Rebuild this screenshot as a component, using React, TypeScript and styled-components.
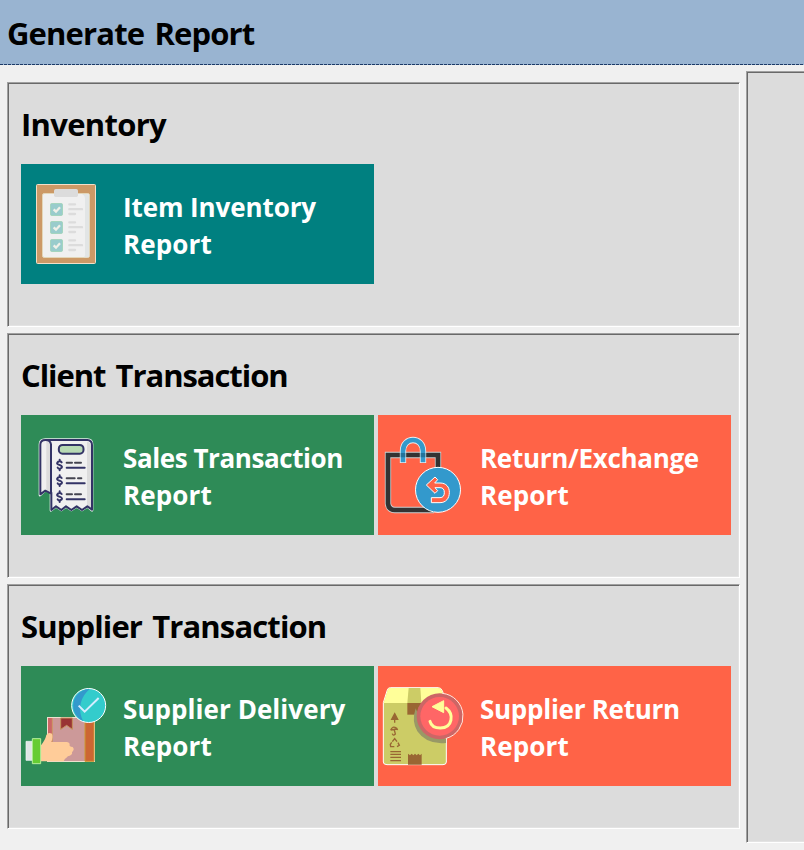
import React from "react";
import styled, { createGlobalStyle } from "styled-components";

const GlobalStyle = createGlobalStyle`
  * { box-sizing: border-box; }
  body {
    margin: 0;
    background: #f0f0f0;
    font-family: "Open Sans", "Noto Sans", sans-serif;
    overflow: hidden;
  }
`;

const Window = styled.div`
  display: flex;
  flex-direction: column;
  width: 804px;
  height: 850px;
  overflow: hidden;
`;

const Header = styled.header`
  flex: none;
  height: 65px;
  padding: 12px 0 0 7px;
  background:
    repeating-linear-gradient(90deg, #1c3a66 0 3px, #99b4d1 3px 4px) 0 100% / 100% 1px no-repeat,
    #99b4d1;
`;

const Title = styled.h1<{ $spacing: number }>`
  margin: 0;
  height: 44px;
  font-size: 31px;
  line-height: 42px;
  font-weight: 700;
  letter-spacing: ${(p) => p.$spacing}px;
  word-spacing: 3px;
  white-space: nowrap;
  color: #000;
`;

const Content = styled.main`
  display: flex;
  align-items: flex-start;
  gap: 6px;
  padding: 6px 0 0 7px;
`;

const Sections = styled.div`
  display: flex;
  flex: none;
  flex-direction: column;
  gap: 6px;
  width: 733px;
  padding-top: 11px;
`;

const Sunken = styled.section`
  background: #dcdcdc;
  border: 1px solid;
  border-color: #a0a0a0 #fff #fff #a0a0a0;
  box-shadow: inset 1px 1px 0 #696969, inset -1px -1px 0 #e3e3e3;
`;

const Group = styled(Sunken)`
  height: 245px;
  padding: 20px 0 0 13px;
`;

const SidePanel = styled(Sunken)`
  flex: none;
  width: 80px;
  height: 772px;
`;

const Tiles = styled.div`
  display: flex;
  gap: 4px;
  margin-top: 17px;
`;

const Tile = styled.button<{ $color: string }>`
  display: flex;
  align-items: center;
  width: 353px;
  height: 120px;
  padding: 0;
  border: 0;
  background: ${(p) => p.$color};
  color: #fff;
  font: 700 26px/37px "Open Sans", "Noto Sans", sans-serif;
  text-align: left;
`;

const Label = styled.span`
  padding: 3px 0 0 2px;
`;

const Line = styled.span<{ $spacing: number }>`
  display: block;
  white-space: nowrap;
  letter-spacing: ${(p) => p.$spacing}px;
`;

const Icon = styled.svg`
  flex: none;
  width: 100px;
  height: 120px;
`;

const InventoryIcon = () => (
  <Icon viewBox="3 0 300 360">
    <rect x="49.500" y="61.500" width="177" height="237" rx="3" fill="#cc9966" stroke="#f3dfc8" strokeWidth="3" />
    <rect x="67.500" y="88.500" width="141" height="192" rx="5" fill="#f0f0f0" stroke="#e3d6b8" strokeWidth="3" />
    <path d="M186 90h15q6 0 6 6v180q0 4-6 4h-9q4-4 3-12V102q0-8-9-12z" fill="#e2e5e5" />
    <rect x="102" y="75" width="72" height="24" rx="5" fill="#dcdcdc" />
    {[117, 171, 225].map((y) => (
      <g key={y}>
        <rect x="91.500" y={y + 1.5} width="36" height="36" rx="4" fill="#99cccc" stroke="#a4d5be" strokeWidth="3" />
        <path d={`M101 ${y + 19}l7 7 12-13`} fill="none" stroke="#f0f0e8" strokeWidth="7" />
        <path d={`M148 ${y + 4}h17M148 ${y + 18.5}h38M148 ${y + 33}h17`} stroke="#dcdcdc" strokeWidth="7" strokeLinecap="round" />
      </g>
    ))}
  </Icon>
);

const SALES_BODY =
  "M60 240V88Q60 74 76 74H202Q216 74 216 88V286L202 274 186 285 170 274 154 285 138 274 124 285 108 274 93 286V232L76 226z";

const SalesIcon = () => (
  <Icon viewBox="3 0 300 360">
    <path d={SALES_BODY} fill="#f0f0f0" stroke="#e9f2ec" strokeWidth="8" strokeLinejoin="round" />
    <path d="M79 80q12 0 12 15v136l-12-6z" fill="#dcdcdc" />
    <path d="M201 80q12 2 12 15v185l-12-9z" fill="#dcdcdc" />
    <path
      d="M93 232V88Q91 75 76 75 61 75 61 89V238L76 227 92 235M76 75H202Q216 76 216 90V284L202 274 186 285 170 274 154 285 138 274 124 285 108 274 94 285V232"
      fill="none"
      stroke="#333366"
      strokeWidth="6"
      strokeLinejoin="round"
    />
    <rect x="116.500" y="90" width="74" height="26" rx="11" fill="#b7d9b4" stroke="#333366" strokeWidth="6" />
    {[150, 197, 245].map((y) => (
      <g key={y} fill="none" stroke="#333366" strokeWidth="6" strokeLinecap="round">
        <path d={`M125 ${y - 8}Q121 ${y - 13} 115 ${y - 10}C107 ${y - 4} 114 ${y - 1} 119 ${y}C128 ${y + 3} 128 ${y + 8} 121 ${y + 11}Q115 ${y + 12} 113 ${y + 8}M119 ${y - 16}v5M119 ${y + 11}v5`} />
        <path d={y === 197 ? `M140 ${y - 7}h24M174 ${y - 7}h10` : `M140 ${y - 7}h16M165 ${y - 7}h18`} stroke="#444450" />
        <path d={`M140 ${y + 8}h54`} />
      </g>
    ))}
  </Icon>
);

const ExchangeIcon = () => (
  <Icon viewBox="12 0 300 360">
    <path d="M192 160V120H42V266Q44 284 62 285H180" fill="none" stroke="#cfcfcf" strokeWidth="19" />
    <path d="M192 160V120H42V266Q44 284 62 285H180" fill="none" stroke="#333" strokeWidth="14" />
    <path d="M87 144V108C87 64 147 64 147 108V144" fill="none" stroke="#eee" strokeWidth="19" />
    <path d="M87 142V108C87 64 147 64 147 108V142" fill="none" stroke="#3399cc" strokeWidth="14" />
    <path d="M80 114h14v13H80zM140 114h14v13h-14z" fill="#23739a" />
    <circle cx="192" cy="224.500" r="67.500" fill="#3399cc" stroke="#fff" strokeWidth="3" />
    <path
      d="M157 210L183 186 191 194 182 204H198C217 204 226 216 226 232 226 250 216 263 198 263H172V248H198C207 248 211 242 211 233 211 223 207 218 198 218H183L191 227 183 235z"
      fill="#ff6347"
      stroke="#fff"
      strokeWidth="3"
    />
  </Icon>
);

const DeliveryIcon = () => (
  <Icon viewBox="3 0 300 360">
    <rect x="82.500" y="154.500" width="141" height="132" fill="#cc9999" stroke="#eee1cf" strokeWidth="3" />
    <path d="M84 156h13v129H84z" fill="#cc6666" />
    <path d="M97 156v129" stroke="#cc9966" strokeWidth="3" />
    <path d="M195 156h27v130h-27z" fill="#cc6633" stroke="#cc9933" strokeWidth="3" />
    <path d="M122 156h35v34l-17-12-18 12z" fill="#993333" stroke="#c4915a" strokeWidth="3" />
    <path
      d="M62 239Q76 222 79 207 85 197 96 203 100 212 94 228H137Q149 227 149 236 147 242 158 243 165 250 156 259 158 266 149 269 142 270 141 274 133 278 131 286H62z"
      fill="#ffcc99"
    />
    <path d="M18 226h18v57H18z" fill="#dfe5e6" stroke="#f5fafa" strokeWidth="2" />
    <path d="M37 218h25v75H37z" fill="#66cc33" stroke="#b7f09c" strokeWidth="3" />
    <circle cx="206" cy="118.500" r="51" fill="#33cccc" stroke="#fff" strokeWidth="3" />
    <path d="M209 69A50 50 0 0 0 190 165C176 140 174 100 209 69" fill="#3399cc" />
    <path d="M176 119L194 137 236 96" fill="none" stroke="#d5edff" strokeWidth="6" />
  </Icon>
);

const SupplierReturnIcon = () => (
  <Icon viewBox="12 0 300 360">
    <path d="M28 110L40 72Q42 65 49 65H193Q201 65 205 74L217 109V288Q217 296 207 296H39Q28 296 28 288z" fill="#cccc66" stroke="#fff" strokeWidth="3" />
    <path d="M29 111L41 72Q43 66 49 66H193Q201 66 204 74L215 111z" fill="#ffff99" />
    <path d="M104 66h35l3 45h-42z" fill="#cccc66" />
    <path d="M100 111h43v35h-43z" fill="#996633" />
    <path d="M102 296v-33l6 5 5-5 5 5 5-5 5 5 5-5 5 5 5-5v33z" fill="#996633" />
    <path d="M125 127Q112 166 130 196 158 237 216 231V218L150 190z" fill="#999966" />
    <g fill="none" stroke="#996633" strokeWidth="4">
      <path d="M62 143l9 17H53zM62 158v12" fill="#996633" />
      <path d="M50 193Q55 178 68 187L71 192M50 192L70 189M60 188L64 204Q57 211 55 203" />
      <path d="M55 227l7-9 7 9M72 230l4 8-7 4M61 242H50l-1-7 4-6" />
      <path d="M49 257h32M49 265h32M49 274h32M49 284h32" />
    </g>
    <circle cx="197" cy="150.500" r="69" fill="#cc6666" />
    <path d="M205 82A69 69 0 0 1 217 217" fill="none" stroke="#ffe7df" strokeWidth="3" />
    <circle cx="197" cy="151" r="58" fill="#ff6666" />
    <path d="M216 126C240 144 237 185 199 186 182 186 171 178 168 166" fill="none" stroke="#ffff99" strokeWidth="9" strokeLinecap="round" />
    <path d="M174 122L209 104V140z" fill="#ffff99" stroke="#ffff99" strokeWidth="3" strokeLinejoin="round" />
  </Icon>
);

type Report = {
  color: string;
  icon: React.ComponentType;
  name: string;
  spacing: number;
};

const groups: { title: string; spacing: number; reports: Report[] }[] = [
  {
    title: "Inventory",
    spacing: -0.7,
    reports: [{ color: "#008080", icon: InventoryIcon, name: "Item Inventory", spacing: -0.1 }],
  },
  {
    title: "Client Transaction",
    spacing: -1.05,
    reports: [
      { color: "#2e8b57", icon: SalesIcon, name: "Sales Transaction", spacing: -0.42 },
      { color: "#ff6347", icon: ExchangeIcon, name: "Return/Exchange", spacing: -0.3 },
    ],
  },
  {
    title: "Supplier Transaction",
    spacing: -0.87,
    reports: [
      { color: "#2e8b57", icon: DeliveryIcon, name: "Supplier Delivery", spacing: 0.06 },
      { color: "#ff6347", icon: SupplierReturnIcon, name: "Supplier Return", spacing: -0.27 },
    ],
  },
];

export default function App() {
  return (
    <Window>
      <GlobalStyle />
      <Header>
        <Title $spacing={-0.85}>Generate Report</Title>
      </Header>
      <Content>
        <Sections>
          {groups.map((group) => (
            <Group key={group.title}>
              <Title as="h2" $spacing={group.spacing}>
                {group.title}
              </Title>
              <Tiles>
                {group.reports.map(({ color, icon: Glyph, name, spacing }) => (
                  <Tile key={name} $color={color}>
                    <Glyph />
                    <Label>
                      <Line $spacing={spacing}>{name}</Line>
                      <Line $spacing={0.1}>Report</Line>
                    </Label>
                  </Tile>
                ))}
              </Tiles>
            </Group>
          ))}
        </Sections>
        <SidePanel />
      </Content>
    </Window>
  );
}
